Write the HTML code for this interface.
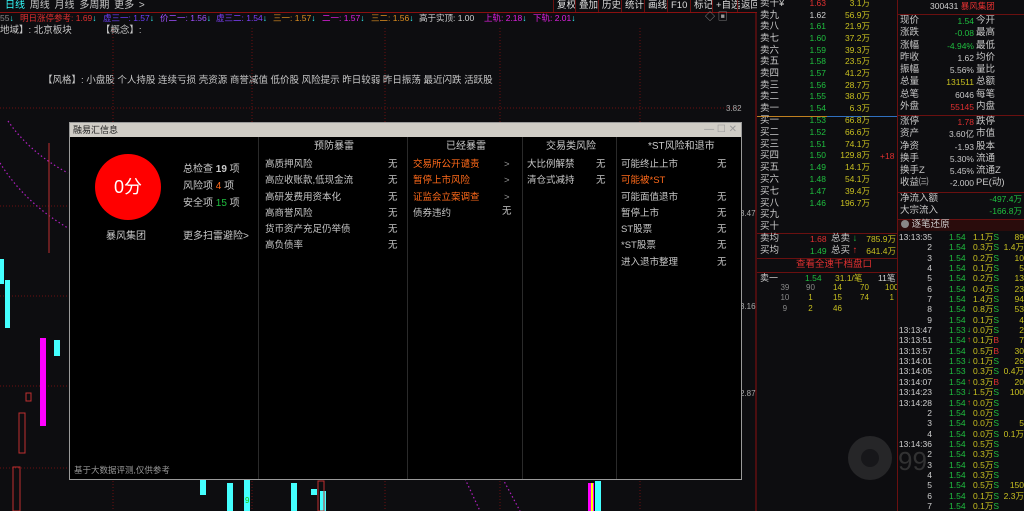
<!DOCTYPE html>
<html><head><meta charset="utf-8">
<style>
*{margin:0;padding:0;box-sizing:border-box}
body{width:1024px;height:511px;overflow:hidden;background:#0d0d10;font-family:"Liberation Sans","Noto Sans CJK SC",sans-serif;font-size:9px;color:#c8c8c8;position:relative}
.a{position:absolute;white-space:nowrap;line-height:12px}
.g{color:#1fbf3f}.r{color:#e03030}.y{color:#c8c020}.w{color:#d0d0d0}.o{color:#ff6a1a}.c{color:#3ff}
.ra{text-align:right}
.btn{position:absolute;top:0;height:12px;border-left:1px solid #6a1010;padding:0 3px;line-height:12px;color:#ddd;font-size:9.5px}
.ind{position:absolute;top:12px;line-height:12px;font-size:8.5px;white-space:nowrap}
</style></head><body>
<div class="a" style="left:5px;top:0;font-size:10px;word-spacing:2px"><span class="c">日线</span> 周线 月线 多周期 更多 &gt;</div>
<div class="btn" style="left:553px">复权</div><div class="btn" style="left:575px">叠加</div><div class="btn" style="left:598px">历史</div><div class="btn" style="left:621px">统计</div><div class="btn" style="left:644px">画线</div><div class="btn" style="left:667px">F10</div><div class="btn" style="left:690px">标记</div><div class="btn" style="left:712px">+自选</div><div class="btn" style="left:737px">返回</div>
<div style="position:absolute;left:0;top:12px;width:757px;height:1px;background:#8a1010"></div>
<div class="ind" style="left:0;color:#888">55<span class="c">↓</span></div>
<div class="ind r" style="left:20px">明日涨停参考: 1.69<span class="c">↓</span></div>
<div class="ind" style="left:103px;color:#7040ff">虚三一: 1.57<span class="c">↓</span></div>
<div class="ind" style="left:160px;color:#a050ff">价二一: 1.56<span class="c">↓</span></div>
<div class="ind" style="left:216px;color:#8040ff">虚三二: 1.54<span class="c">↓</span></div>
<div class="ind" style="left:273px;color:#e09020">三一: 1.57<span class="c">↓</span></div>
<div class="ind" style="left:322px;color:#e020e0">二一: 1.57<span class="c">↓</span></div>
<div class="ind" style="left:371px;color:#e09020">三二: 1.56<span class="c">↓</span></div>
<div class="ind w" style="left:419px">高于实顶: 1.00</div>
<div class="ind" style="left:484px;color:#e020e0">上轨: 2.18<span class="c">↓</span></div>
<div class="ind" style="left:533px;color:#e020e0">下轨: 2.01<span class="c">↓</span></div>
<div class="a" style="left:0;top:25px;font-size:9.5px">地域】: 北京板块 &nbsp;&nbsp;&nbsp;&nbsp;&nbsp;&nbsp;&nbsp;&nbsp;&nbsp;&nbsp;【概念】:</div>
<div class="a" style="left:43px;top:75px;font-size:9.5px">【风格】: 小盘股 个人持股 连续亏损 壳资源 商誉减值 低价股 风险提示 昨日较弱 昨日振荡 最近闪跌 活跃股</div>
<div class="a" style="left:705px;top:12px;color:#999;font-size:10px">◇ ▣</div>
<svg style="position:absolute;left:0;top:13px" width="757" height="498">
<g stroke="#6a1010" stroke-dasharray="1,2">
<line x1="0" y1="95" x2="740" y2="95"/><line x1="0" y1="193" x2="740" y2="193"/><line x1="0" y1="283" x2="740" y2="283"/><line x1="0" y1="373" x2="740" y2="373"/><line x1="0" y1="455" x2="740" y2="455"/>
<line x1="113" y1="15" x2="113" y2="498"/><line x1="252" y1="15" x2="252" y2="498"/><line x1="385" y1="15" x2="385" y2="498"/><line x1="500" y1="15" x2="500" y2="498"/><line x1="640" y1="15" x2="640" y2="498"/>
</g>
<line x1="756" y1="0" x2="756" y2="498" stroke="#8a1010"/>
<g fill="none" stroke="#b020c0" stroke-dasharray="1.5,2.5" stroke-width="1.2">
<path d="M8 108 Q30 140 68 160"/><path d="M0 150 Q25 190 68 215"/>
<path d="M460 455 L480 498"/><path d="M497 455 L520 498"/>
</g>
<g>
<rect x="0" y="246" width="4" height="25" fill="#4ff"/><rect x="5" y="267" width="5" height="48" fill="#4ff"/>
<rect x="13" y="454" width="7" height="44" fill="none" stroke="#c03030"/><rect x="19" y="400" width="6" height="40" fill="none" stroke="#c03030"/>
<rect x="26" y="380" width="5" height="8" fill="none" stroke="#c03030"/><rect x="40" y="325" width="6" height="88" fill="#f0f"/>
<rect x="54" y="327" width="6" height="16" fill="#4ff"/><line x1="49" y1="130" x2="49" y2="240" stroke="#c03030"/>
<rect x="200" y="462" width="6" height="20" fill="#4ff"/><rect x="227" y="470" width="6" height="28" fill="#4ff"/>
<rect x="244" y="463" width="6" height="35" fill="#4ff"/><rect x="291" y="470" width="6" height="28" fill="#4ff"/>
<rect x="311" y="476" width="6" height="6" fill="#4ff"/><rect x="320" y="478" width="6" height="20" fill="#4ff"/>
<rect x="588" y="470" width="6" height="28" fill="#f0f"/><rect x="591" y="470" width="2" height="28" fill="#ff0"/>
<rect x="595" y="468" width="6" height="30" fill="#4ff"/>
<rect x="318" y="468" width="6" height="30" fill="none" stroke="#c03030"/>
</g>
<text x="726" y="98" fill="#aaa" font-size="8">3.82</text>
<text x="740" y="203" fill="#aaa" font-size="8">3.47</text>
<text x="740" y="296" fill="#aaa" font-size="8">3.16</text>
<text x="740" y="383" fill="#aaa" font-size="8">2.87</text>
<text x="245" y="490" fill="#1c1" font-size="8">9</text>
</svg>
<div style="position:absolute;left:69px;top:122px;width:673px;height:358px;background:#000;border:1px solid #9a9a9a">
<div style="height:14px;background:#d0cdc6;color:#222;font-size:9px;line-height:14px;padding-left:3px">融易汇信息<span style="position:absolute;right:4px;color:#999;font-size:10px">— ☐ ✕</span></div>
<div style="position:absolute;left:188px;top:14px;width:1px;height:342px;background:#2a2a2a"></div>
<div style="position:absolute;left:337px;top:14px;width:1px;height:342px;background:#2a2a2a"></div>
<div style="position:absolute;left:452px;top:14px;width:1px;height:342px;background:#2a2a2a"></div>
<div style="position:absolute;left:546px;top:14px;width:1px;height:342px;background:#2a2a2a"></div>
<div style="position:absolute;left:25px;top:31px;width:66px;height:66px;border-radius:50%;background:#ff0000;color:#fff;font-size:18px;line-height:66px;text-align:center">0分</div>
<div class="a" style="left:36px;top:108px;font-size:10px">暴风集团</div>
<div class="a" style="left:113px;top:38px;font-size:10px;line-height:17px">总检查 <b style="color:#ccc">19</b> 项<br>风险项 <span class="o">4</span> 项<br>安全项 <span class="g">15</span> 项</div>
<div class="a" style="left:113px;top:108px;font-size:10px">更多扫雷避险&gt;</div>
<div class="a" style="left:244px;top:18px;font-size:10px">预防暴雷</div>
<div class="a" style="left:195px;top:34px;font-size:9.5px;line-height:16.3px">高质押风险<br>高应收账款,低现金流<br>高研发费用资本化<br>高商誉风险<br>货币资产充足仍举债<br>高负债率</div>
<div class="a" style="left:318px;top:34px;font-size:9.5px;line-height:16.3px">无<br>无<br>无<br>无<br>无<br>无</div>
<div class="a" style="left:376px;top:18px;font-size:10px">已经暴雷</div>
<div class="a" style="left:343px;top:34px;font-size:9.5px;line-height:16.3px"><span class="o">交易所公开谴责</span><br><span class="o">暂停上市风险</span><br><span class="o">证监会立案调查</span><br>债券违约</div>
<div class="a" style="left:434px;top:34px;font-size:9.5px;line-height:16.3px;color:#999">&gt;<br>&gt;<br>&gt;<br></div>
<div class="a" style="left:432px;top:83px;font-size:9.5px">无</div>
<div class="a" style="left:476px;top:18px;font-size:10px">交易类风险</div>
<div class="a" style="left:457px;top:34px;font-size:9.5px;line-height:16.3px">大比例解禁<br>清仓式减持</div>
<div class="a" style="left:526px;top:34px;font-size:9.5px;line-height:16.3px">无<br>无</div>
<div class="a" style="left:578px;top:18px;font-size:10px">*ST风险和退市</div>
<div class="a" style="left:551px;top:34px;font-size:9.5px;line-height:16.3px">可能终止上市<br><span class="o">可能被*ST</span><br>可能面值退市<br>暂停上市<br>ST股票<br>*ST股票<br>进入退市整理</div>
<div class="a" style="left:647px;top:34px;font-size:9.5px;line-height:16.3px">无<br><br>无<br>无<br>无<br>无<br>无</div>
<div class="a" style="left:4px;top:341px;font-size:8.5px;color:#999">基于大数据评测,仅供参考</div>
</div>
<div style="position:absolute;left:757px;top:0;width:141px;height:511px;background:#0d0d10"></div>
<div class="a" style="left:760px;top:-2px;font-size:9.5px;line-height:11.67px">卖十¥<br>卖九<br>卖八<br>卖七<br>卖六<br>卖五<br>卖四<br>卖三<br>卖二<br>卖一</div>
<div class="a ra" style="left:800px;width:26px;top:-2px;font-size:8.5px;line-height:11.67px"><span class="r">1.63</span><br><span class="w">1.62</span><br><span class="g">1.61<br>1.60<br>1.59<br>1.58<br>1.57<br>1.56<br>1.55<br>1.54</span></div>
<div class="a ra y" style="left:840px;width:30px;top:-2px;font-size:8.5px;line-height:11.67px">3.1万<br>56.9万<br>21.9万<br>37.2万<br>39.3万<br>23.5万<br>41.2万<br>28.7万<br>38.0万<br>6.3万</div>
<div style="position:absolute;left:757px;top:116px;width:70px;height:1px;background:#c08020"></div>
<div style="position:absolute;left:827px;top:116px;width:71px;height:1px;background:#3070c0"></div>
<div class="a" style="left:760px;top:115px;font-size:9.5px;line-height:11.8px">买一<br>买二<br>买三<br>买四<br>买五<br>买六<br>买七<br>买八<br>买九<br>买十</div>
<div class="a ra g" style="left:800px;width:26px;top:115px;font-size:8.5px;line-height:11.8px">1.53<br>1.52<br>1.51<br>1.50<br>1.49<br>1.48<br>1.47<br>1.46</div>
<div class="a ra y" style="left:838px;width:32px;top:115px;font-size:8.5px;line-height:11.8px">66.8万<br>66.6万<br>74.1万<br>129.8万<br>14.1万<br>54.1万<br>39.4万<br>196.7万</div>
<div class="a r" style="left:880px;top:150px;font-size:8.5px">+18</div>
<div style="position:absolute;left:757px;top:233px;width:141px;height:1px;background:#6a1010"></div>
<div class="a" style="left:760px;top:233px;font-size:9.5px;line-height:12px">卖均<br>买均</div>
<div class="a r" style="left:810px;top:233px;font-size:8.5px">1.68</div><div class="a g" style="left:810px;top:245px;font-size:8.5px">1.49</div>
<div class="a" style="left:831px;top:233px;font-size:9.5px;line-height:12px">总卖 <span class="g">↓</span><br>总买 <span class="r">↑</span></div>
<div class="a ra y" style="left:862px;width:34px;top:233px;font-size:8.5px;line-height:12px">785.9万<br>641.4万</div>
<div style="position:absolute;left:757px;top:258px;width:141px;height:1px;background:#6a1010"></div>
<div class="a r" style="left:796px;top:259px;font-size:9.5px">查看全速千档盘口</div>
<div style="position:absolute;left:757px;top:272px;width:141px;height:1px;background:#6a1010"></div>
<div class="a" style="left:760px;top:272px;font-size:9px">卖一</div><div class="a g" style="left:805px;top:272px;font-size:8.5px">1.54</div><div class="a y" style="left:835px;top:272px;font-size:8.5px">31.1/笔</div><div class="a w" style="left:878px;top:272px;font-size:8.5px">11笔</div>
<div class="a" style="left:776px;top:283px;font-size:8px;line-height:10.3px;color:#888">&nbsp;&nbsp;39<br>&nbsp;&nbsp;10<br>&nbsp;&nbsp;&nbsp;9</div>
<div class="a y" style="left:806px;top:283px;font-size:8px;line-height:10.3px"><span style="color:#888">90</span><br>&nbsp;1<br>&nbsp;2</div>
<div class="a y" style="left:833px;top:283px;font-size:8px;line-height:10.3px">14<br>15<br>46</div>
<div class="a y" style="left:860px;top:283px;font-size:8px;line-height:10.3px">70<br>74</div>
<div class="a y" style="left:885px;top:283px;font-size:8px;line-height:10.3px">100<br>&nbsp;&nbsp;1</div>
<div style="position:absolute;left:897px;top:0;width:1px;height:511px;background:#6a1010"></div>
<div class="a" style="left:930px;top:0;font-size:8.5px;line-height:13px"><span class="w">300431</span> <span class="r">暴风集团</span></div>
<div style="position:absolute;left:898px;top:14px;width:126px;height:1px;background:#6a1010"></div>
<div class="a" style="left:900px;top:15px;font-size:9.5px;line-height:12.3px">现价<br>涨跌<br>涨幅<br>昨收<br>振幅<br>总量<br>总笔<br>外盘</div>
<div class="a ra" style="left:930px;width:44px;top:15px;font-size:8.5px;line-height:12.3px"><span class="g">1.54</span><br><span class="g">-0.08</span><br><span class="g">-4.94%</span><br>1.62<br>5.56%<br><span class="y">131511</span><br>6046<br><span class="r">55145</span></div>
<div class="a" style="left:976px;top:15px;font-size:9.5px;line-height:12.3px">今开<br>最高<br>最低<br>均价<br>量比<br>总额<br>每笔<br>内盘</div>
<div style="position:absolute;left:898px;top:115px;width:126px;height:1px;background:#6a1010"></div>
<div class="a" style="left:900px;top:116px;font-size:9.5px;line-height:12.3px">涨停<br>资产<br>净资<br>换手<br>换手Z<br>收益㈢</div>
<div class="a ra" style="left:930px;width:44px;top:116px;font-size:8.5px;line-height:12.3px"><span class="r">1.78</span><br>3.60亿<br>-1.93<br>5.30%<br>5.45%<br>-2.000</div>
<div class="a" style="left:976px;top:116px;font-size:9.5px;line-height:12.3px">跌停<br>市值<br>股本<br>流通<br>流通Z<br>PE(动)</div>
<div style="position:absolute;left:898px;top:192px;width:126px;height:1px;background:#6a1010"></div>
<div class="a" style="left:900px;top:193px;font-size:9.5px;line-height:12.3px">净流入额<br>大宗流入</div>
<div class="a ra g" style="left:970px;width:52px;top:193px;font-size:8.5px;line-height:12.3px">-497.4万<br>-166.8万</div>
<div style="position:absolute;left:898px;top:219px;width:126px;height:12px;background:#2a0c0c;border-top:1px solid #6a1010"></div>
<div class="a" style="left:901px;top:219px;font-size:9.5px"><span style="display:inline-block;width:8px;height:8px;border-radius:50%;background:#888;vertical-align:-1px"></span> 逐笔还原</div>
<div class="a ra w" style="left:896px;width:36px;top:232px;font-size:8.5px;line-height:10.35px">13:13:35<br>2<br>3<br>4<br>5<br>6<br>7<br>8<br>9<br>13:13:47<br>13:13:51<br>13:13:57<br>13:14:01<br>13:14:05<br>13:14:07<br>13:14:23<br>13:14:28<br>2<br>3<br>4<br>13:14:36<br>2<br>3<br>4<br>5<br>6<br>7</div>
<div class="a g" style="left:949px;top:232px;font-size:8.5px;line-height:10.35px">1.54<br>1.54<br>1.54<br>1.54<br>1.54<br>1.54<br>1.54<br>1.54<br>1.54<br>1.53<br>1.54<br>1.54<br>1.53<br>1.53<br>1.54<br>1.53<br>1.54<br>1.54<br>1.54<br>1.54<br>1.54<br>1.54<br>1.54<br>1.54<br>1.54<br>1.54<br>1.54</div>
<div class="a" style="left:967px;top:232px;font-size:8px;line-height:10.35px"><br><br><br><br><br><br><br><br><br><span class="g">↓</span><br><span class="r">↑</span><br><br><span class="g">↓</span><br><br><span class="r">↑</span><br><span class="g">↓</span><br><span class="r">↑</span></div>
<div class="a y" style="left:973px;top:232px;font-size:8.5px;line-height:10.35px">1.1万<span class="g">S</span><br>0.3万<span class="g">S</span><br>0.2万<span class="g">S</span><br>0.1万<span class="g">S</span><br>0.2万<span class="g">S</span><br>0.4万<span class="g">S</span><br>1.4万<span class="g">S</span><br>0.8万<span class="g">S</span><br>0.1万<span class="g">S</span><br>0.0万<span class="g">S</span><br>0.1万<span class="r">B</span><br>0.5万<span class="r">B</span><br>0.1万<span class="g">S</span><br>0.3万<span class="g">S</span><br>0.3万<span class="r">B</span><br>1.5万<span class="g">S</span><br>0.0万<span class="g">S</span><br>0.0万<span class="g">S</span><br>0.0万<span class="g">S</span><br>0.0万<span class="g">S</span><br>0.5万<span class="g">S</span><br>0.3万<span class="g">S</span><br>0.5万<span class="g">S</span><br>0.3万<span class="g">S</span><br>0.5万<span class="g">S</span><br>0.1万<span class="g">S</span><br>0.1万<span class="g">S</span></div>
<div class="a y ra" style="left:998px;width:26px;top:232px;font-size:8.5px;line-height:10.35px">89<br>1.4万<br>10<br>5<br>13<br>23<br>94<br>53<br>4<br>2<br>7<br>30<br>26<br>0.4万<br>20<br>100<br>&nbsp;<br>&nbsp;<br>5<br>0.1万<br>&nbsp;<br>&nbsp;<br>&nbsp;<br>&nbsp;<br>150<br>2.3万</div>
<svg style="position:absolute;left:848px;top:432px" width="120" height="70"><circle cx="22" cy="26" r="22" fill="#555" opacity="0.35"/><circle cx="22" cy="26" r="9" fill="#0d0d10" opacity="0.6"/><text x="50" y="38" fill="#555" opacity="0.5" font-size="26" font-family="Liberation Sans">99</text></svg>
</body></html>
